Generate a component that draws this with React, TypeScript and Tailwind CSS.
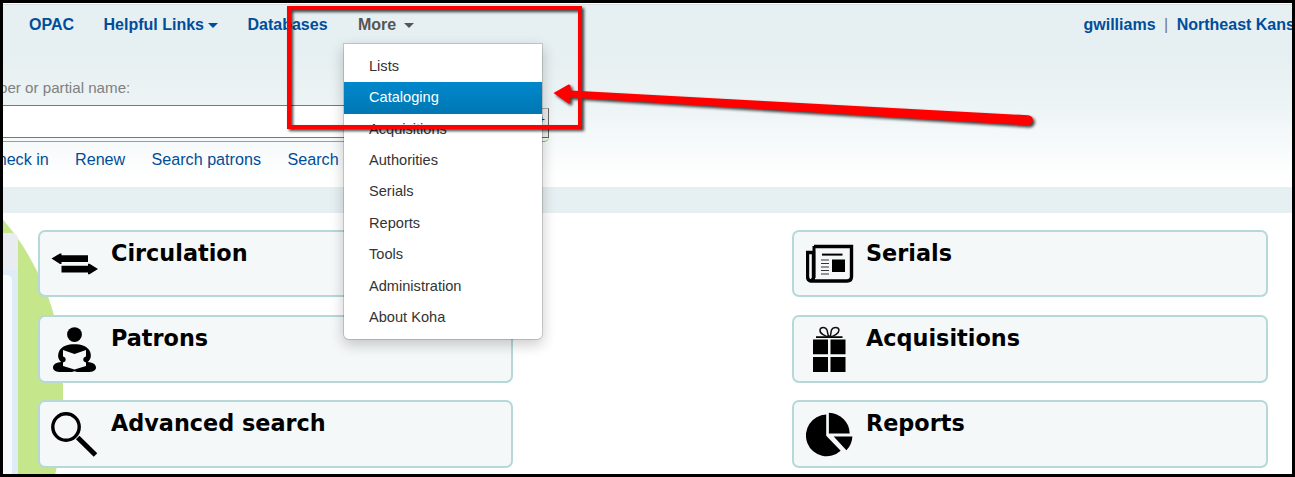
import React from "react";

const Caret = ({ className }: { className: string }) => (
  <span className={`inline-block border-x-[5px] border-t-[5px] border-x-transparent ${className}`} />
);

const menuItems = ["Lists", "Cataloging", "Acquisitions", "Authorities", "Serials", "Reports", "Tools", "Administration", "About Koha"];

const CirculationIcon = () => (
  <svg width="48" height="48" viewBox="0 0 48 48" className="shrink-0">
    <path d="M0.500 18.600 9 13.400H10.500V15.300H37V22H10.500V23.900H9ZM47 29 38.500 23.800H37V25.700H10.500V32.400H37V34.300H38.500Z" />
  </svg>
);

const PatronsIcon = () => (
  <svg width="48" height="48" viewBox="0 0 48 48" className="shrink-0">
    <circle cx="23.500" cy="9.600" r="7.400" />
    <path d="M23.500 19.200C30 19.200 36 21 38.500 25.500C41 30.500 39.800 34.500 36.800 37C41 37.300 45 39 45 42.500C45 45.800 41.500 47 37 47H10C5.500 47 2 45.800 2 42.500C2 39 6 37.300 10.200 37C7.200 34.500 6 30.500 8.500 25.500C11 21 17 19.200 23.500 19.200Z" />
    <path d="M12 25 23.500 29 35 25V31.500C32.500 32 31.500 34.500 33 36.500L35 37.500V41L23.500 44.500 12 41V37.500L14 36.500C15.500 34.500 14.500 32 12 31.500Z" fill="#f4f8f9" />
    <path d="M19 47.500 23.500 46.200 28 47.500Z" fill="#f4f8f9" />
  </svg>
);

const SearchIcon = () => (
  <svg width="48" height="48" viewBox="0 0 48 48" className="shrink-0">
    <circle cx="15" cy="17" r="13.200" fill="none" stroke="#000" strokeWidth="3.400" />
    <path d="M26.700 27.500 44.500 45" stroke="#000" strokeWidth="5" />
  </svg>
);

const SerialsIcon = () => (
  <svg width="48" height="48" viewBox="0.5 0 48 48" className="shrink-0">
    <path d="M8.500 6.500H46V36.500Q46 41 41.500 41H6Q2 41 2 36V12.500H8V37Q8 39.500 6 40" fill="none" stroke="#000" strokeWidth="3.400" />
    <path d="M8.500 6V38" stroke="#000" strokeWidth="3" />
    <path d="M16.500 14.600H37" stroke="#000" strokeWidth="2" />
    <path d="M15.500 20H23.500M15.500 23.500H23.500M15.500 27H23.500M15.500 30.500H23.500M15.500 34H23.500" stroke="#333" strokeWidth="1.200" />
    <path d="M26.500 19.500H39.500V32H26.500Z" />
  </svg>
);

const GiftIcon = () => (
  <svg width="48" height="48" viewBox="0.5 -0.5 48 48" className="shrink-0">
    <path d="M7.500 14H22.500V28.700H7.500ZM25 14H40V28.700H25ZM7.500 31.500H22.500V46.500H7.500ZM25 31.500H40V46.500H25ZM10.500 10.700H37V12.500H10.500Z" />
    <path d="M24 11.500C19 11 14 7.500 14.500 4.500C15 1 20 1 21.500 4.500C22.500 7 21.500 9.500 24 11.500C26 9.500 25 7 26 4.500C27.500 1 33 1 33.500 4.500C33.500 7.500 29 11 24 11.500Z" fill="none" stroke="#111" strokeWidth="1.500" />
  </svg>
);

const PieIcon = () => (
  <svg width="48" height="48" viewBox="0.8 -0.8 48 48" className="shrink-0">
    <path d="M21 3.800A20.800 20.800 0 1 0 35.500 40L21 25Z" />
    <path d="M23.700 2A21 21 0 0 1 44.500 22.700H23.700Z" />
    <path d="M28.500 25.700H47.200A21 21 0 0 1 41.200 39.500Z" />
  </svg>
);

const Card = ({ title, icon, className = "pl-[11px]" }: { title: string; icon: React.ReactNode; className?: string }) => (
  <div className={`flex rounded-[7px] border-2 border-[#b7d8d9] bg-[#f4f8f9] pt-[8px] ${className}`}>
    {icon}
    <h2 className="ml-[12px] -mt-[1px] whitespace-nowrap font-['DejaVu_Sans',sans-serif] text-[22.35px] font-bold leading-[28px] text-black">{title}</h2>
  </div>
);

export default function App() {
  return (
    <div className="relative flex h-[477px] w-[1295px] flex-col overflow-hidden border-[3px] border-black bg-white font-['Liberation_Sans',Arial,sans-serif]">
      <header className="flex h-[184px] shrink-0 flex-col border-t border-white bg-[linear-gradient(#e6eff1_50px,#e6eff1_55px,#edf4f6_102px,#ffffff_174px)]">
        <nav className="flex h-[40px] shrink-0 items-center whitespace-nowrap border-t border-[#dcdfdf] pl-[26px] text-[16px] font-bold text-[#004d99]">
          <a className="w-[74.5px]">OPAC</a>
          <a className="flex w-[144px] items-center">Helpful Links<Caret className="ml-[4px] mt-[2px] border-t-[#004d99]" /></a>
          <a className="w-[110.5px]">Databases</a>
          <a className="flex items-center text-[#555555]">More<Caret className="ml-[8px] mt-[2px] border-t-[#555555]" /></a>
          <div className="ml-auto w-[208.500px] overflow-hidden">
            <a>gwilliams</a>
            <span className="mx-[8.500px] font-normal text-[#777777]">|</span>
            <a>Northeast Kansas</a>
          </div>
        </nav>
        <div className="mt-[29px] flex h-[32px] shrink-0 overflow-hidden pt-[5px] text-[15.15px] leading-[20px] text-[#808080]">
          <span className="-ml-[4px]">ber or partial name:</span>
        </div>
        <div className="flex h-[37px] w-[546px] shrink-0 rounded-br-[5px] border-b border-[#7dc32c]">
          <div className="h-[33px] flex-1 border-y border-[#777777] bg-white" />
          <div className="mt-[3px] h-[30px] w-[10px] border border-l-0 border-[#666666] border-t-[#aaaaaa] bg-[#eeeeee] text-[10px] leading-[22px] text-[#333333]">+</div>
        </div>
        <div className="flex h-[35px] shrink-0 items-center overflow-hidden whitespace-nowrap text-[16.150px] text-[#004d99]">
          <span className="-ml-[17px] w-[89px]">Check in</span>
          <span className="w-[76.500px]">Renew</span>
          <span className="w-[136px]">Search patrons</span>
          <span>Search</span>
        </div>
      </header>
      <div className="h-[26px] shrink-0 bg-[#e6eff1]" />
      <main className="relative flex flex-1 overflow-hidden">
        <div className="absolute -left-[440px] -top-[81px] h-[530px] w-[500px] rounded-full bg-[#c5e68a]" />
        <aside className="relative mt-[20px] w-[15px] shrink-0 rounded-tr-[6px] bg-[#e9edf2] pt-[37px]">
          <div className="h-[220px] bg-[#dfebf7] pt-[5px]">
            <div className="h-[215px] w-[9px] rounded-tr-[5px] bg-[#f6fafd]" />
          </div>
        </aside>
        <section className="relative ml-[20px] mt-[17px] grid w-[1230px] shrink-0 grid-cols-[475px_476px] grid-rows-[67px_18px_68px_17px_68px] justify-between">
          <Card title="Circulation" icon={<CirculationIcon />} />
          <Card title="Serials" icon={<SerialsIcon />} className="pl-[12px]" />
          <div className="col-span-2" />
          <Card title="Patrons" icon={<PatronsIcon />} />
          <Card title="Acquisitions" icon={<GiftIcon />} className="pl-[12px]" />
          <div className="col-span-2" />
          <Card title="Advanced search" icon={<SearchIcon />} />
          <Card title="Reports" icon={<PieIcon />} className="pl-[12px]" />
        </section>
      </main>

      <ul className="absolute left-[340px] top-[40px] h-[297px] w-[200px] rounded-b-[6px] border border-black/15 bg-white bg-clip-padding pt-[7px] shadow-[0_5px_14px_rgba(0,0,0,0.2)]">
        {menuItems.map((item) => (
          <li
            key={item}
            className={`flex h-[31.420px] items-center pl-[25px] text-[14.6px] ${item === "Cataloging" ? "bg-linear-to-b from-[#0088cc] to-[#0077b3] text-white" : "text-[#333333]"}`}
          >
            {item}
          </li>
        ))}
      </ul>

      <svg className="pointer-events-none absolute -left-[3px] -top-[3px] drop-shadow-[2px_2px_1.5px_rgba(0,0,0,0.75)]" width="1295" height="477" viewBox="0 0 1295 477">
        <rect x="289" y="8" width="291" height="119" fill="none" stroke="#ff0000" strokeWidth="4" />
        <path d="M553.500 93 568.500 84.500Q571.500 84 570.500 90.500L1028 115.200A5 5 0 0 1 1027.500 125.400L570 97.500Q571.500 104 568.500 103.500Z" fill="#ff0000" />
      </svg>
    </div>
  );
}
